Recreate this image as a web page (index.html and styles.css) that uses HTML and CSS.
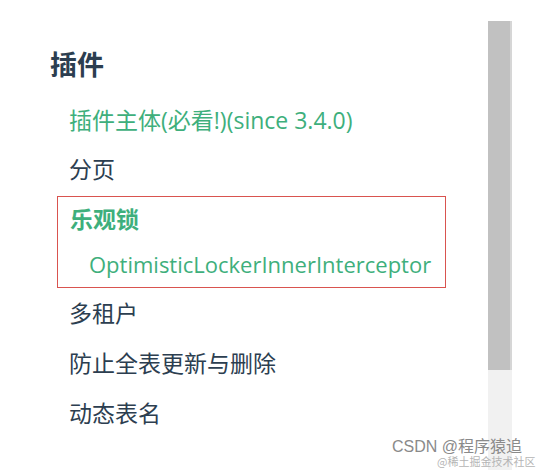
FILE: index.html
```html
<!DOCTYPE html>
<html lang="zh-CN">
<head>
<meta charset="utf-8">
<title>插件</title>
<link rel="stylesheet" href="styles.css">
</head>
<body>
<div class="page">
  <nav class="sidebar">
    <h2 class="group-title">插件</h2>
    <ul class="links">
      <li class="link link-active">插件主体(必看!)(since 3.4.0)</li>
      <li class="link">分页</li>
      <li class="highlight">
        <div class="link link-current">乐观锁</div>
        <div class="link link-sub">OptimisticLockerInnerInterceptor</div>
      </li>
      <li class="link link-after">多租户</li>
      <li class="link link-after">防止全表更新与删除</li>
      <li class="link link-after">动态表名</li>
    </ul>
  </nav>
  <div class="scrollbar">
    <div class="thumb"></div>
    <div class="track"></div>
  </div>
  <div class="edge"></div>
</div>
<div class="watermark">
  <span class="wm-main">CSDN @程序猿追</span>
  <span class="wm-sub">@稀土掘金技术社区</span>
</div>
</body>
</html>
```
FILE: styles.css
```css
html, body {
  margin: 0;
  padding: 0;
  background: #ffffff;
}
body {
  font-family: "Open Sans", "Noto Sans CJK SC", sans-serif;
  color: #2c3e50;
  width: 542px;
  height: 470px;
  overflow: hidden;
  position: relative;
}
.page {
  display: flex;
  height: 470px;
}
.sidebar {
  width: 488px;
  padding-top: 44px;
  box-sizing: border-box;
}
.group-title {
  margin: 0 0 0 50px;
  font-size: 27px;
  line-height: 40px;
  font-weight: 700;
  color: #2c3e50;
  font-family: "Noto Sans CJK SC", sans-serif;
}
.links {
  list-style: none;
  margin: 12px 0 0 57px;
  padding: 0;
  width: 389px;
}
.link {
  font-size: 23px;
  line-height: 49px;
  height: 49px;
  padding-left: 12px;
  white-space: nowrap;
}
.link-active {
  color: #3eaf7c;
}
.highlight {
  border: 1px solid #d9534f;
  margin: 2px 0 0 0;
}
.highlight .link {
  line-height: 45px;
  height: 45px;
}
.link-current {
  color: #3eaf7c;
  font-weight: 700;
}
.link-sub {
  color: #3eaf7c;
  padding-left: 31px;
  font-size: 22px;
}
.link-after {
  height: 50px;
  line-height: 50px;
}
.scrollbar {
  width: 24px;
  display: flex;
  flex-direction: column;
  padding-top: 21px;
}
.thumb {
  height: 349px;
  background: #c1c1c1;
  border-right: 2px solid #d6d6d6;
}
.track {
  flex: 1;
  background: #f1f1f1;
}
.edge {
  flex: 1;
}
.watermark {
  position: absolute;
  left: 392px;
  top: 438px;
  width: 150px;
  height: 32px;
}
.wm-main {
  position: absolute;
  left: 0;
  top: 0;
  font-family: "Liberation Sans", "Noto Sans CJK SC", sans-serif;
  font-size: 16px;
  line-height: 18px;
  color: #8a8a8a;
  white-space: nowrap;
}
.wm-sub {
  position: absolute;
  left: 45px;
  top: 17px;
  font-family: "Noto Sans CJK SC", sans-serif;
  font-size: 11px;
  line-height: 13px;
  color: #b5b5b5;
  white-space: nowrap;
}
```
